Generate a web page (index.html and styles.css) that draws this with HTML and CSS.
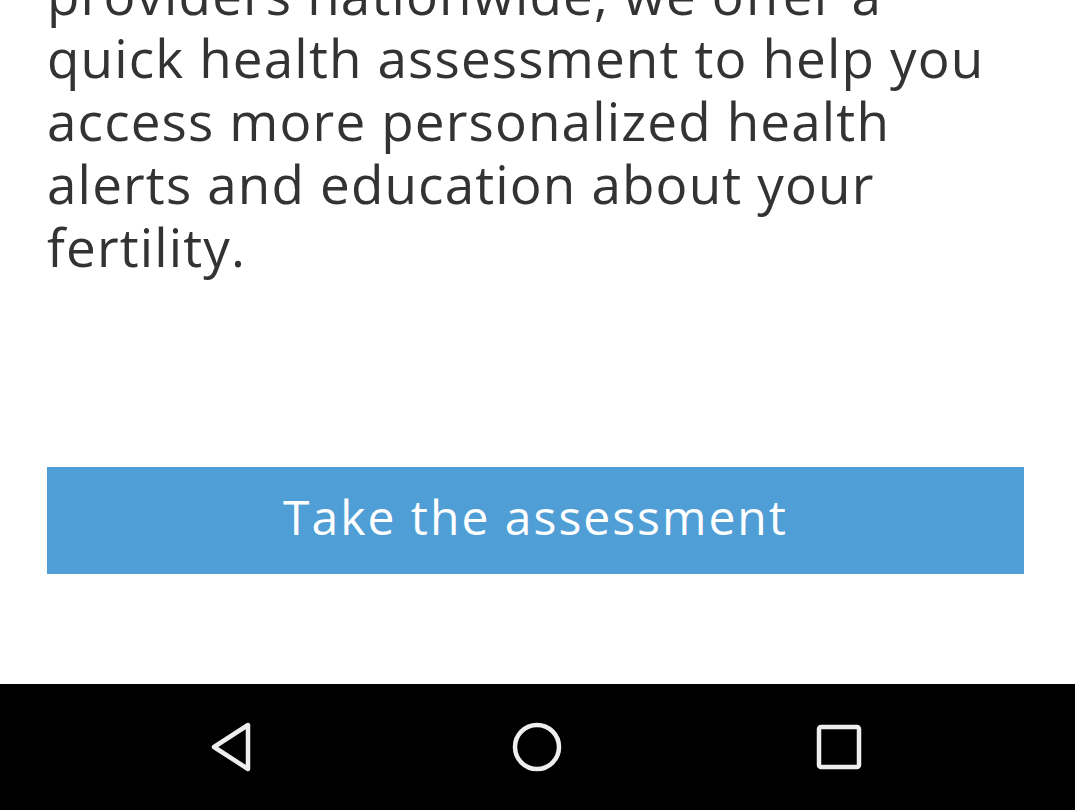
FILE: index.html
```html
<!DOCTYPE html>
<html lang="en">
<head>
<meta charset="utf-8">
<title>Assessment</title>
<link rel="stylesheet" href="styles.css">
</head>
<body>
<div class="screen">
  <main class="content">
    <p class="intro">providers nationwide, we offer a quick health assessment to help you access more personalized health alerts and education about your fertility.</p>
    <button class="cta" type="button">Take the assessment</button>
  </main>
  <nav class="navbar">
    <svg class="nav-icon back" width="44" height="50" viewBox="0 0 44 50" aria-label="Back">
      <path d="M38 3 L38 47 L4 25 Z" fill="none" stroke="#eeeeee" stroke-width="4.5" stroke-linejoin="round"/>
    </svg>
    <svg class="nav-icon home" width="50" height="50" viewBox="0 0 50 50" aria-label="Home">
      <circle cx="25" cy="25" r="22" fill="none" stroke="#eeeeee" stroke-width="4.5"/>
    </svg>
    <svg class="nav-icon recents" width="46" height="46" viewBox="0 0 46 46" aria-label="Recents">
      <rect x="3" y="3" width="40" height="40" rx="2" fill="none" stroke="#eeeeee" stroke-width="4.5"/>
    </svg>
  </nav>
</div>
</body>
</html>
```

FILE: styles.css
```css
* { box-sizing: border-box; }
html, body {
  margin: 0;
  padding: 0;
  background: #ffffff;
}
.screen {
  width: 1075px;
  height: 810px;
  display: flex;
  flex-direction: column;
  overflow: hidden;
}
.content {
  flex: 1;
  padding: 0 51px 0 47px;
  display: flex;
  flex-direction: column;
  overflow: hidden;
}
.intro {
  margin: -37px 0 0 0;
  font-family: "Open Sans", "DejaVu Sans", sans-serif;
  font-size: 53px;
  line-height: 63px;
  letter-spacing: 1.15px;
  color: #333333;
}
.cta {
  margin-top: 189px;
  height: 107px;
  width: 100%;
  flex-shrink: 0;
  border: none;
  background: #509ed6;
  color: #ffffff;
  font-family: "Open Sans", "DejaVu Sans", sans-serif;
  font-size: 48px;
  letter-spacing: 2px;
  padding: 0 0 8px 0;
}
.navbar {
  height: 126px;
  flex-shrink: 0;
  background: #000000;
  display: flex;
  align-items: center;
  justify-content: center;
}
.nav-icon {
  display: block;
}
.back { margin-right: 258px; margin-left: -4px; }
.home { margin-right: 254px; }
```
